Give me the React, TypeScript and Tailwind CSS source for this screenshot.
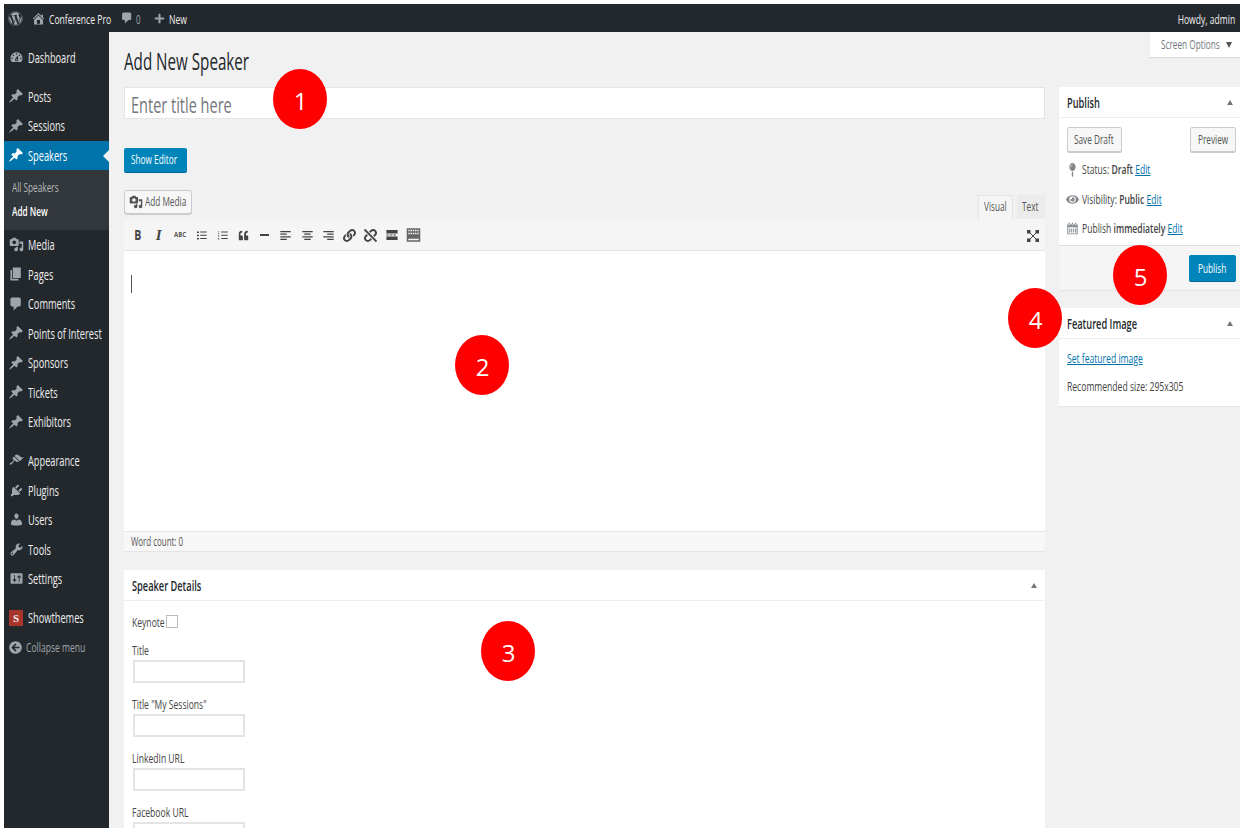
import React from "react";
import { FaWordpress, FaPlus, FaQuoteLeft, FaLink, FaUnlink, FaEye, FaMapPin, FaArrowCircleLeft } from "react-icons/fa";

const P = {
  post: "M10.44 3.02l1.82-1.82 6.36 6.35-1.83 1.82c-1.05-.68-2.48-.57-3.41.36l-.75.75c-.92.93-1.04 2.35-.35 3.41l-1.83 1.82-2.41-2.41-2.8 2.79c-.42.42-3.38 2.71-3.8 2.29s1.86-3.39 2.28-3.81l2.79-2.79L4.1 9.36l1.83-1.82c1.05.69 2.48.57 3.4-.36l.75-.75c.93-.92 1.05-2.35.36-3.41z",
  comment: "M5 2h9q.82 0 1.41.59T16 4v7q0 .82-.59 1.41T14 13h-2l-5 5v-5H5q-.82 0-1.41-.59T3 11V4q0-.82.59-1.41T5 2z",
  home: "M16 8.5l1.53 1.53-1.06 1.06L10 4.62l-6.47 6.47-1.06-1.06L10 2.5l4 4v-2h2v4zm-6-2.46l6 5.99V18H4v-5.97zM12 17v-5H8v5h4z",
  media: "M13 11V4c0-.55-.45-1-1-1h-1.67L9 1H5L3.67 3H2c-.55 0-1 .45-1 1v7c0 .55.45 1 1 1h10c.55 0 1-.45 1-1zM7 4.5c1.38 0 2.5 1.12 2.5 2.5S8.38 9.5 7 9.5 4.5 8.38 4.5 7 5.62 4.5 7 4.5zM14 6h5v10.5c0 1.38-1.12 2.5-2.5 2.5S14 17.88 14 16.5s1.12-2.5 2.5-2.5c.17 0 .34.02.5.05V9h-3V6zm-4 8.05V13h2v3.5c0 1.38-1.12 2.5-2.5 2.5S7 17.88 7 16.5 8.12 14 9.5 14c.17 0 .34.02.5.05z",
  page: "M6 15V2h10v13H6zm-1 1h8v2H3V5h2v11z",
  appearance: "M14.48 11.06L7.41 3.99l1.5-1.5c.5-.56 2.3-.47 3.51.32 1.21.8 1.43 1.28 2.91 2.1 1.18.64 2.45 1.26 4.45.85zm-.71.71L6.7 4.7 4.93 6.47c-.39.39-.39 1.02 0 1.41l1.06 1.06c.39.39.39 1.03 0 1.42-.6.6-1.43 1.11-2.21 1.69-.35.26-.7.53-1.01.84C1.43 13.23.4 14.75 1.1 15.45c.71.7 2.22-.33 3.55-1.66.31-.31.58-.66.84-1.01.58-.78 1.09-1.61 1.69-2.21.39-.39 1.02-.39 1.41 0l1.06 1.06c.39.39 1.02.39 1.41 0z",
  plugins: "M13.11 4.36L9.87 7.6 8 5.73l3.24-3.24c.35-.34 1.05-.2 1.56.32.52.51.66 1.21.31 1.55zm-8 1.77l.91-1.12 9.01 9.01-1.19.84c-.71.71-2.63 1.16-3.82 1.16H6.14L4.9 17.26c-.59.59-1.54.59-2.12 0-.59-.58-.59-1.53 0-2.12l1.24-1.24v-3.88c0-1.13.4-3.19 1.09-3.89zm7.26 3.97l3.24-3.24c.34-.35 1.04-.21 1.55.31.52.51.66 1.21.31 1.55l-3.24 3.25z",
  users: "M10 9.25c-2.27 0-2.73-3.44-2.73-3.44C7 4.02 7.82 2 9.97 2c2.16 0 2.98 2.02 2.71 3.81 0 0-.41 3.44-2.68 3.44zm0 2.57L12.72 10c2.39 0 4.52 2.33 4.52 4.53v2.49s-3.65 1.13-7.24 1.13c-3.65 0-7.24-1.13-7.24-1.13v-2.49c0-2.25 1.94-4.48 4.47-4.48z",
  tools: "M16.68 9.77c-1.34 1.34-3.3 1.67-4.95.99l-5.41 6.52c-.99.99-2.59.99-3.58 0s-.99-2.59 0-3.57l6.52-5.42c-.68-1.65-.35-3.61.99-4.95 1.28-1.28 3.12-1.62 4.72-1.06l-2.89 2.89 2.82 2.82 2.86-2.87c.53 1.58.18 3.39-1.08 4.65zM3.81 16.21c.4.39 1.04.39 1.43 0 .4-.4.4-1.04 0-1.43-.39-.4-1.03-.4-1.43 0-.39.39-.39 1.03 0 1.43z",
  settings: "M18 16V4c0-.55-.45-1-1-1H3c-.55 0-1 .45-1 1v12c0 .55.45 1 1 1h14c.55 0 1-.45 1-1zM8 11h1c.55 0 1 .45 1 1s-.45 1-1 1H8v1.5c0 .28-.22.5-.5.5s-.5-.22-.5-.5V13H6c-.55 0-1-.45-1-1s.45-1 1-1h1V5.5c0-.28.22-.5.5-.5s.5.22.5.5V11zm5-2h-1c-.55 0-1-.45-1-1s.45-1 1-1h1V5.5c0-.28.22-.5.5-.5s.5.22.5.5V7h1c.55 0 1 .45 1 1s-.45 1-1 1h-1v5.5c0 .28-.22.5-.5.5s-.5-.22-.5-.5V9z",
  dashboard: "M3.76 16h12.48c1.1-1.37 1.76-3.11 1.76-5 0-4.42-3.58-8-8-8s-8 3.58-8 8c0 1.89.66 3.63 1.76 5zM10 4c.55 0 1 .45 1 1s-.45 1-1 1-1-.45-1-1 .45-1 1-1zM6 6c.55 0 1 .45 1 1s-.45 1-1 1-1-.45-1-1 .45-1 1-1zm8 0c.55 0 1 .45 1 1s-.45 1-1 1-1-.45-1-1 .45-1 1-1zm-5.37 5.55L12 7v6c0 1.1-.9 2-2 2s-2-.9-2-2c0-.57.24-1.08.63-1.45zM4 10c.55 0 1 .45 1 1s-.45 1-1 1-1-.45-1-1 .45-1 1-1zm12 0c.55 0 1 .45 1 1s-.45 1-1 1-1-.45-1-1 .45-1 1-1zm-5 3c0-.55-.45-1-1-1s-1 .45-1 1 .45 1 1 1 1-.45 1-1z",
  ul: "M3 4h3v2H3zM8 4h10v1.4H8zM3 9h3v2H3zM8 9h10v1.4H8zM3 14h3v2H3zM8 14h10v1.4H8z",
  ol: "M3 4h2v1H3zM3 9h2v1H3zM3 14h2v1H3zM3 6h2v.8H3zM3 11h2v.8H3zM3 16h2v.8H3zM8 4h10v1.2H8zM8 9h10v1.2H8zM8 14h10v1.2H8z",
  left: "M2 3h16v2H2zM2 7h10v2H2zM2 11h16v2H2zM2 15h10v2H2z",
  center: "M2 3h16v2H2zM5 7h10v2H5zM2 11h16v2H2zM5 15h10v2H5z",
  right: "M2 3h16v2H2zM8 7h10v2H8zM2 11h16v2H2zM8 15h10v2H8z",
  hr: "M2 3h16v5H2zM2 12h16v5H2zM2 9.3h3.5v1.4H2zM7 9.3h3.5v1.4H7zM12 9.3h3.5v1.4H12z",
  kitchen: "M1 1h18v18H1zM3 3v2h2V3zM6 3v2h2V3zM9 3v2h2V3zM12 3v2h2V3zM15 3v2h2V3zM3 7v2h2V7zM6 7v2h2V7zM9 7v2h2V7zM12 7v2h2V7zM15 7v2h2V7zM3 15v2h14v-2z",
  calendar: "M4 1h2v3H4zM9 1h2v3H9zM14 1h2v3h-2zM2 3h1.5v2h3V3h2v2h3V3h2v2h3V3H18v16H2zM3.5 8v9.5h13V8zM5 10h1.5v6H5zM8 10h1.5v6H8zM11 10h1.5v6H11zM14 10h1.5v6H14z",
};

const D = ({ d, className = "" }: { d: string; className?: string }) => (
  <svg viewBox="0 0 20 20" fill="currentColor" fillRule="evenodd" className={className}>
    <path d={d} />
  </svg>
);

const T = ({ children, className = "" }: { children: React.ReactNode; className?: string }) => (
  <span className={"inline-block whitespace-nowrap origin-left scale-x-[0.66] " + className}>{children}</span>
);

function Item({ icon, label, active = false }: { icon: React.ReactNode; label: string; active?: boolean }) {
  return (
    <div className={"relative flex h-[29.5px] items-center " + (active ? "bg-[#0073aa] text-white" : "text-[#eeeeee]")}>
      <span className={"flex w-6 shrink-0 justify-center " + (active ? "text-white" : "text-[#a0a5aa]")}>{icon}</span>
      <T className="text-[14px]">{label}</T>
      {active && <span className="absolute right-0 top-[9px] h-0 w-0 border-y-[6px] border-r-[6px] border-y-transparent border-r-[#f1f1f1]" />}
    </div>
  );
}

const pin = <D d={P.post} className="h-[16px] w-[16px]" />;

function Field({ label }: { label: string }) {
  return (
    <div className="mb-[11px]">
      <div className="flex h-[20px] items-center pt-px text-[#444]"><T className="text-[13px]">{label}</T></div>
      <div className="ml-px h-[23px] w-[112px] border-2 border-[#e4e4e4] bg-white" />
    </div>
  );
}

const tool = "flex w-[21.2px] justify-center text-[#444]";

function Badge({ n, className }: { n: string; className: string }) {
  return (
    <div className={"absolute flex h-[60px] w-[54px] items-center justify-center rounded-[50%] bg-[#ff0000] pl-px pt-[4px] text-[24px] text-white " + className}>{n}</div>
  );
}

const Btn = ({ label, className }: { label: string; className: string }) => (
  <div className={"flex h-[25px] items-center rounded-[2px] border border-[#cccccc] bg-[#f7f7f7] pt-[2px] text-[#555] shadow-[0_1px_0_#ccc] " + className}>
    <T className="text-[12.5px]">{label}</T>
  </div>
);

const Up = ({ className }: { className: string }) => (
  <span className={"absolute h-0 w-0 border-x-[3px] border-b-[5px] border-x-transparent border-b-[#72777c] " + className} />
);

function BoxHead({ label, right }: { label: string; right: string }) {
  return (
    <div className="relative flex h-[31px] items-center border-b border-[#eeeeee] pl-[8px] font-semibold text-[#23282d]">
      <T className="text-[14px]">{label}</T>
      <Up className={"top-[13px] " + right} />
    </div>
  );
}

const Edit = () => <span className="text-[#0073aa] underline">Edit</span>;

export default function App() {
  return (
    <div className="relative flex h-[834px] w-[1247px] flex-col overflow-hidden bg-white pb-[6px] pl-1 pr-[7px] pt-1 font-['Open_Sans',sans-serif] text-[#444]">
      <header className="flex h-[28px] shrink-0 items-center bg-[#23282d] text-[#eeeeee]">
        <FaWordpress className="ml-[4px] h-[15px] w-[15px] text-[#a0a5aa]" />
        <D d={P.home} className="ml-[8px] h-[15px] w-[15px] text-[#a0a5aa]" />
        <span className="ml-[3px] w-[71px]"><T className="text-[13px]">Conference Pro</T></span>
        <D d={P.comment} className="h-[14px] w-[14px] text-[#a0a5aa]" />
        <span className="ml-[2px] w-[18px] text-[#a0a5aa]"><T className="text-[12px]">0</T></span>
        <FaPlus className="h-[11px] w-[11px] text-[#a0a5aa]" />
        <span className="ml-[4px]"><T className="text-[13px]">New</T></span>
        <span className="ml-auto mr-[5px] whitespace-nowrap"><T className="origin-right text-[13px]">Howdy, admin</T></span>
      </header>
      <div className="flex min-h-0 flex-1">
        <aside className="w-[105px] shrink-0 bg-[#23282d] pt-[10.5px]">
          <Item icon={<D d={P.dashboard} className="h-[15px] w-[15px]" />} label="Dashboard" />
          <div className="h-[9.5px]" />
          <Item icon={pin} label="Posts" />
          <Item icon={pin} label="Sessions" />
          <Item icon={pin} label="Speakers" active />
          <div className="h-[60px] bg-[#32373c] pt-[7px]">
            <div className="flex h-[23.5px] items-center pl-2 text-[#b4b9be]"><T className="text-[12.5px]">All Speakers</T></div>
            <div className="flex h-[23.5px] items-center pl-2 font-semibold text-white"><T className="text-[12.5px]">Add New</T></div>
          </div>
          <Item icon={<D d={P.media} className="h-[15px] w-[15px]" />} label="Media" />
          <Item icon={<D d={P.page} className="h-[16px] w-[16px]" />} label="Pages" />
          <Item icon={<D d={P.comment} className="h-[16px] w-[16px]" />} label="Comments" />
          <Item icon={pin} label="Points of Interest" />
          <Item icon={pin} label="Sponsors" />
          <Item icon={pin} label="Tickets" />
          <Item icon={pin} label="Exhibitors" />
          <div className="h-[9.5px]" />
          <Item icon={<D d={P.appearance} className="h-[15px] w-[15px]" />} label="Appearance" />
          <Item icon={<D d={P.plugins} className="h-[15px] w-[15px]" />} label="Plugins" />
          <Item icon={<D d={P.users} className="h-[15px] w-[15px]" />} label="Users" />
          <Item icon={<D d={P.tools} className="h-[15px] w-[15px]" />} label="Tools" />
          <Item icon={<D d={P.settings} className="h-[15px] w-[15px]" />} label="Settings" />
          <div className="h-[9.5px]" />
          <Item icon={<span className="flex h-[16px] w-[14px] items-center justify-center bg-[#a9342c] font-['Liberation_Serif',serif] text-[11px] font-bold text-[#eee]">S</span>} label="Showthemes" />
          <div className="relative flex h-[29.5px] items-center text-[#a0a5aa]">
            <span className="flex w-[22px] shrink-0 justify-center"><FaArrowCircleLeft className="h-[13px] w-[13px]" /></span>
            <T className="text-[13px]">Collapse menu</T>
          </div>
        </aside>
        <main className="relative flex min-w-0 flex-1 gap-[14px] overflow-hidden bg-[#f1f1f1] pl-[15px]">
          <div className="absolute right-0 top-0 flex h-[25px] w-[90px] items-center bg-white pl-[11px] pt-[2px] text-[#72777c] shadow-[0_1px_1px_rgba(0,0,0,0.1)]">
            <T className="text-[12.5px]">Screen Options</T>
            <span className="absolute right-[8px] top-[10px] h-0 w-0 border-x-[3px] border-t-[6px] border-x-transparent border-t-[#555]" />
          </div>
          <div className="w-[921px] shrink-0">
            <h1 className="flex h-[55px] items-center pt-[3px] text-[#23282d]"><T className="text-[23px]">Add New Speaker</T></h1>
            <div className="flex h-[32px] items-center border border-[#e5e5e5] bg-white pl-[6px] pt-[2px] text-[#72777c]"><T className="text-[22px]">Enter title here</T></div>
            <div className="mt-[29px] flex h-[24px] w-[63px] items-center rounded-[2px] bg-[#0085ba] pl-[7px] text-white shadow-[0_1px_0_#006799]">
              <T className="text-[12.5px]">Show Editor</T>
            </div>
            <div className="mt-[18px] flex h-[29px] items-start justify-between">
              <div className="flex h-[24px] w-[68px] items-center gap-[2px] rounded-[3px] border border-[#cccccc] bg-[#f7f7f7] pl-[4px] text-[#555] shadow-[0_1px_0_#ccc]">
                <D d={P.media} className="h-[14px] w-[14px] shrink-0" />
                <T className="text-[12.5px]">Add Media</T>
              </div>
              <div className="mt-[5px] flex h-[24px] items-end gap-[4px]">
                <div className="flex h-[24px] w-[35px] items-center border border-b-0 border-[#e5e5e5] bg-[#f5f5f5] pl-[5px] text-[#555]"><T className="text-[12.5px]">Visual</T></div>
                <div className="flex h-[24px] w-[28px] items-center bg-[#ebebeb] pl-[5px] text-[#555]"><T className="text-[12.5px]">Text</T></div>
              </div>
            </div>
            <div className="relative flex h-[32px] items-center border-b border-[#e5e5e5] bg-[#f5f5f5] pl-[3px] pt-[1px]">
              <span className={tool}><span className="scale-x-[0.75] text-[14px] font-bold leading-none">B</span></span>
              <span className={tool}><span className="font-['Liberation_Serif',serif] text-[15px] font-bold italic leading-none">I</span></span>
              <span className={tool}><span className="scale-x-[0.85] text-[7px] font-bold text-[#555]">ABC</span></span>
              <span className={tool}><D d={P.ul} className="h-[13px] w-[13px]" /></span>
              <span className={tool}><D d={P.ol} className="h-[13px] w-[13px]" /></span>
              <span className={tool}><FaQuoteLeft className="h-[11px] w-[11px] scale-x-90" /></span>
              <span className={tool}><span className="h-[2px] w-[9px] bg-[#444]" /></span>
              <span className={tool}><D d={P.left} className="h-[13px] w-[13px]" /></span>
              <span className={tool}><D d={P.center} className="h-[13px] w-[13px]" /></span>
              <span className={tool}><D d={P.right} className="h-[13px] w-[13px]" /></span>
              <span className={tool}><FaLink className="h-[13px] w-[13px]" /></span>
              <span className={tool}><FaUnlink className="h-[13px] w-[13px]" /></span>
              <span className={tool}><D d={P.hr} className="h-[14px] w-[14px]" /></span>
              <span className={tool}><D d={P.kitchen} className="h-[16px] w-[15px] text-[#666]" /></span>
              <svg viewBox="0 0 12 12" className="absolute right-[6px] top-[11px] h-[12px] w-[12px] text-[#444]" fill="currentColor" stroke="currentColor">
                <path d="M0 0h3.5v3.5H0zM8.5 0H12v3.5H8.5zM0 8.5h3.5V12H0zM8.5 8.5H12V12H8.5z" stroke="none" />
                <path d="M2 2l8 8M10 2l-8 8" strokeWidth="1" />
              </svg>
            </div>
            <div className="h-[280px] bg-white pl-[7px] pt-[24px]"><div className="h-[18px] w-px bg-[#555]" /></div>
            <div className="flex h-[20px] items-center border-t border-[#e5e5e5] bg-[#f7f7f7] pl-[7px] text-[#555] shadow-[0_1px_1px_rgba(0,0,0,0.05)]"><T className="text-[12px]">Word count: 0</T></div>
            <section className="mt-[19px] bg-white pb-4 shadow-[0_1px_1px_rgba(0,0,0,0.05)]">
              <BoxHead label="Speaker Details" right="right-[8px]" />
              <div className="pl-[8px] pt-[11px]">
                <div className="mb-[10px] flex h-[18px] items-center">
                  <span className="w-[34px]"><T className="text-[13px]">Keynote</T></span>
                  <span className="h-[13px] w-[12px] border border-[#bbbbbb] bg-white" />
                </div>
                <Field label="Title" />
                <Field label={'Title "My Sessions"'} />
                <Field label="LinkedIn URL" />
                <Field label="Facebook URL" />
              </div>
            </section>
          </div>
          <div className="w-[181px] shrink-0 pt-[55px]">
            <section className="h-[203px] bg-white shadow-[0_1px_1px_rgba(0,0,0,0.05)]">
              <BoxHead label="Publish" right="right-[7px]" />
              <div className="flex justify-between pl-[8px] pr-[4px] pt-[9px]">
                <Btn label="Save Draft" className="w-[55px] pl-[6px]" />
                <Btn label="Preview" className="w-[46px] pl-[7px]" />
              </div>
              <div className="pl-[7px] pt-[3px]">
                <div className="flex h-[29.5px] items-center gap-[3px]">
                  <span className="flex w-[13px] justify-center text-[#82878c]"><FaMapPin className="h-[14px] w-[14px] scale-x-[0.8]" /></span>
                  <T className="text-[13px]">Status: <b className="font-semibold">Draft</b> <Edit /></T>
                </div>
                <div className="flex h-[29.5px] items-center gap-[3px]">
                  <span className="flex w-[13px] justify-center text-[#82878c]"><FaEye className="h-[13px] w-[13px]" /></span>
                  <T className="text-[13px]">Visibility: <b className="font-semibold">Public</b> <Edit /></T>
                </div>
                <div className="flex h-[29.5px] items-center gap-[3px]">
                  <span className="flex w-[13px] justify-center text-[#82878c]"><D d={P.calendar} className="h-[15px] w-[14px]" /></span>
                  <T className="text-[13px]">Publish <b className="font-semibold">immediately</b> <Edit /></T>
                </div>
              </div>
              <div className="mt-[1.5px] flex h-[45px] justify-end border-t border-[#dddddd] bg-[#f5f5f5] pr-[4px] pt-[9px]">
                <div className="flex h-[26px] w-[47px] items-center rounded-[2px] bg-[#0085ba] pl-[9px] pt-[2px] text-white shadow-[0_1px_0_#006799]"><T className="text-[12.5px]">Publish</T></div>
              </div>
            </section>
            <section className="mt-[18px] h-[98px] bg-white shadow-[0_1px_1px_rgba(0,0,0,0.05)]">
              <BoxHead label="Featured Image" right="right-[7px]" />
              <div className="mt-[10px] flex h-[20px] items-center pl-[8px] text-[#0073aa]"><T className="text-[13px] underline">Set featured image</T></div>
              <div className="mt-[8px] flex h-[20px] items-center pl-[8px]"><T className="text-[13px]">Recommended size: 295x305</T></div>
            </section>
          </div>
        </main>
      </div>
      <Badge n="1" className="left-[273px] top-[69px]" />
      <Badge n="2" className="left-[455px] top-[335px]" />
      <Badge n="3" className="left-[481px] top-[621px]" />
      <Badge n="4" className="left-[1008px] top-[288px]" />
      <Badge n="5" className="left-[1113px] top-[245px]" />
    </div>
  );
}
